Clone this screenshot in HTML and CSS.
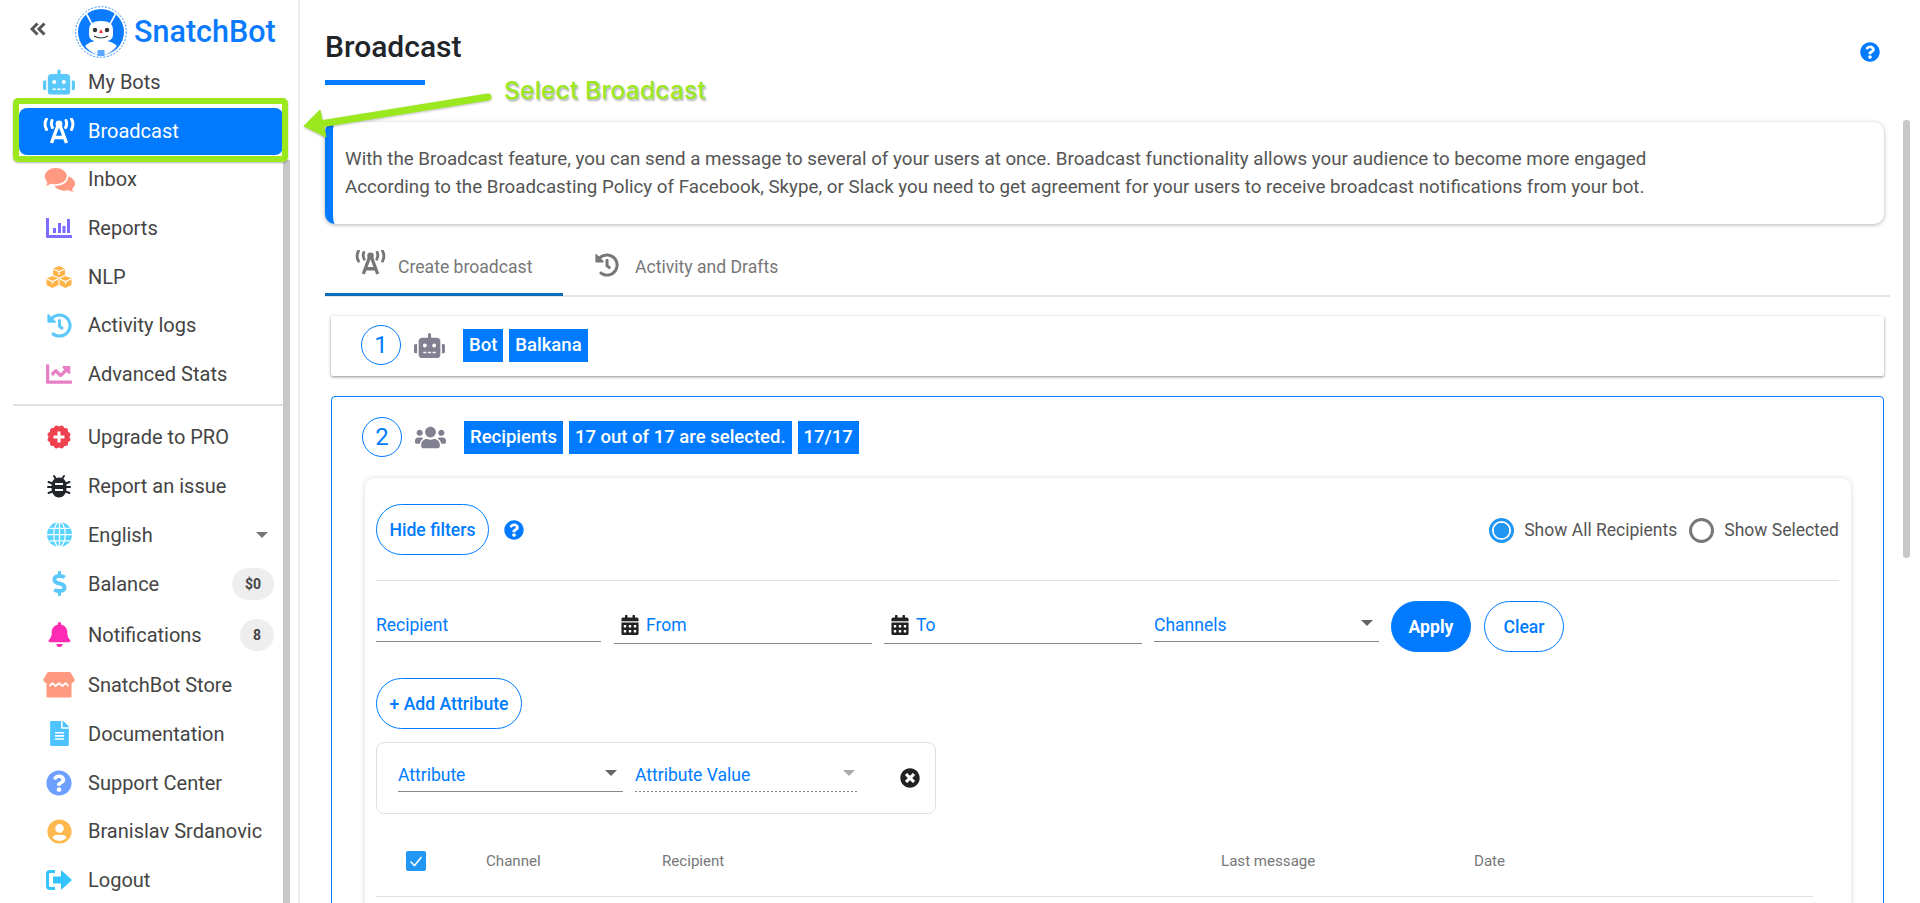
FILE: index.html
```html
<!DOCTYPE html>
<html lang="en">
<head>
<meta charset="utf-8">
<title>Broadcast - SnatchBot</title>
<link rel="stylesheet" href="styles.css">
</head>
<body>
<svg class="defs" aria-hidden="true">
  <symbol id="i-robot" viewBox="0 0 640 512"><path d="M32,224H64V416H32A31.96166,31.96166,0,0,1,0,384V256A31.96166,31.96166,0,0,1,32,224Zm512-48V448a64.06328,64.06328,0,0,1-64,64H160a64.06328,64.06328,0,0,1-64-64V176a79.974,79.974,0,0,1,80-80H288V32a32,32,0,0,1,64,0V96H464A79.974,79.974,0,0,1,544,176ZM264,256a40,40,0,1,0-40,40A39.997,39.997,0,0,0,264,256Zm-8,128H192v32h64Zm96,0H288v32h64ZM456,256a40,40,0,1,0-40,40A39.997,39.997,0,0,0,456,256Zm-8,128H384v32h64ZM640,256V384a31.96166,31.96166,0,0,1-32,32H576V224h32A31.96166,31.96166,0,0,1,640,256Z"/></symbol>
  <symbol id="i-help" viewBox="0 0 512 512"><path d="M504 256c0 136.997-111.043 248-248 248S8 392.997 8 256C8 119.083 119.043 8 256 8s248 111.083 248 248zM262.655 90c-54.497 0-89.255 22.957-116.549 63.758-3.536 5.286-2.353 12.415 2.715 16.258l34.699 26.31c5.205 3.947 12.621 3.008 16.665-2.122 17.864-22.658 30.113-35.797 57.303-35.797 20.429 0 45.698 13.148 45.698 32.958 0 14.976-12.363 22.667-32.534 33.976C247.128 238.528 216 254.941 216 296v4c0 6.627 5.373 12 12 12h56c6.627 0 12-5.373 12-12v-1.333c0-28.462 83.186-29.647 83.186-106.667 0-58.002-60.165-102-116.531-102zM256 338c-25.365 0-46 20.635-46 46 0 25.364 20.635 46 46 46s46-20.636 46-46c0-25.365-20.635-46-46-46z"/></symbol>
  <symbol id="i-history" viewBox="0 0 512 512"><path d="M504 255.531c.253 136.64-111.18 248.372-247.82 248.468-59.015.042-113.223-20.53-155.822-54.911-11.077-8.94-11.905-25.541-1.839-35.607l11.267-11.267c8.609-8.609 22.353-9.551 31.891-1.984C173.062 425.135 212.781 440 256 440c101.705 0 184-82.311 184-184 0-101.705-82.311-184-184-184-48.814 0-93.149 18.969-126.068 49.932l50.754 50.754c10.08 10.08 2.941 27.314-11.313 27.314H24c-8.837 0-16-7.163-16-16V38.627c0-14.254 17.234-21.393 27.314-11.314l49.372 49.372C129.209 34.136 189.552 8 256 8c136.81 0 247.747 110.78 248 247.531zm-180.912 78.784l9.823-12.63c8.138-10.463 6.253-25.542-4.21-33.679L288 256.349V152c0-13.255-10.745-24-24-24h-16c-13.255 0-24 10.745-24 24v135.651l65.409 50.874c10.463 8.137 25.541 6.253 33.679-4.21z"/></symbol>
  <symbol id="i-cal" viewBox="0 0 448 512"><path d="M0 464c0 26.5 21.5 48 48 48h352c26.5 0 48-21.5 48-48V192H0v272zm320-196c0-6.6 5.4-12 12-12h40c6.6 0 12 5.4 12 12v40c0 6.6-5.4 12-12 12h-40c-6.6 0-12-5.4-12-12v-40zm0 128c0-6.6 5.4-12 12-12h40c6.6 0 12 5.4 12 12v40c0 6.6-5.4 12-12 12h-40c-6.6 0-12-5.4-12-12v-40zM192 268c0-6.6 5.4-12 12-12h40c6.6 0 12 5.4 12 12v40c0 6.6-5.4 12-12 12h-40c-6.6 0-12-5.4-12-12v-40zm0 128c0-6.6 5.4-12 12-12h40c6.6 0 12 5.4 12 12v40c0 6.6-5.4 12-12 12h-40c-6.6 0-12-5.4-12-12v-40zM64 268c0-6.6 5.4-12 12-12h40c6.6 0 12 5.4 12 12v40c0 6.6-5.4 12-12 12H76c-6.6 0-12-5.4-12-12v-40zm0 128c0-6.6 5.4-12 12-12h40c6.6 0 12 5.4 12 12v40c0 6.6-5.4 12-12 12H76c-6.6 0-12-5.4-12-12v-40zM400 64h-48V16c0-8.8-7.2-16-16-16h-32c-8.8 0-16 7.2-16 16v48H160V16c0-8.8-7.2-16-16-16h-32c-8.8 0-16 7.2-16 16v48H48C21.5 64 0 85.5 0 112v48h448v-48c0-26.5-21.5-48-48-48z"/></symbol>
  <symbol id="i-air" viewBox="0 0 32 26"><g fill="none" stroke="currentColor"><path d="M8.500 25 15 7.500h2L23.500 25M11 19.500h10" stroke-width="3.400"/><path d="M9 2.500Q7.600 6 9.400 9.500M23 2.500q1.400 3.500-.4 7M3.500 1Q.6 6 3.500 11.500M28.500 1q2.900 5 0 10.500" stroke-width="3" stroke-linecap="round"/></g><circle cx="16" cy="6" r="3.400" fill="currentColor"/></symbol>
</svg>

<aside class="sidebar">
  <header class="brand">
    <button class="collapse" type="button" aria-label="Collapse"><svg viewBox="0 0 16 14"><path d="M7.500 1.500 2 7l5.500 5.500M14.500 1.500 9 7l5.500 5.500" fill="none" stroke="currentColor" stroke-width="3"/></svg></button>
    <svg class="logo" viewBox="0 0 52 52">
      <circle cx="26" cy="26" r="25.300" fill="#fff" stroke="#2f8bff" stroke-width="1" stroke-dasharray="2 1.500"/>
      <circle cx="26" cy="26" r="23" fill="#0a7bff"/>
      <path d="M10 40Q14 36 20 35H32Q38 36 42 40Q35 49 26 49T10 40Z" fill="#fff"/>
      <path d="M11 7 18 20M41 7 34 20" stroke="#fff" stroke-width="1.600" stroke-linecap="round"/>
      <path d="M14 24Q14 15 26 15T38 24V29Q38 36 26 36T14 29Z" fill="#fff"/>
      <circle cx="20" cy="24" r="2.200" fill="#333"/><circle cx="32" cy="24" r="2.200" fill="#333"/>
      <path d="M26 23l2 4h-4z" fill="#f33"/>
      <path d="M19 30Q26 34 33 30" fill="none" stroke="#333" stroke-width="1.200"/>
      <rect x="22.500" y="44" width="7" height="6" fill="#5aa8ff"/>
    </svg>
    <span class="brand-name">SnatchBot</span>
  </header>
  <nav class="menu">
    <a class="item"><span class="ico"><svg class="c-sky s28" viewBox="0 0 640 512"><use href="#i-robot"/></svg></span>My Bots</a>
    <a class="item active"><span class="ico"><svg class="s32" viewBox="0 0 32 26"><use href="#i-air"/></svg></span>Broadcast</a>
    <a class="item"><span class="ico"><svg class="c-salmon s28" viewBox="0 0 30 24"><path d="M20 9c5.500 0 10 3.200 10 7.200 0 2-1.100 3.700-2.800 5 .2 1.200 1 2 1.800 2.600-2 .2-3.900-.5-5.100-1.500-1.200.4-2.500.6-3.900.6-5.500 0-10-3.200-10-7.200S14.500 9 20 9z"/><path d="M12 .8c6.200 0 11.200 3.800 11.200 8.500S18.200 17.800 12 17.800c-1.500 0-3-.2-4.300-.7C6 18.500 3.700 19.300 1 19c1.200-1 2-2.300 2.300-3.500C1.900 13.900.8 11.700.8 9.300.8 4.600 5.800.8 12 .8z" stroke="#fff" stroke-width="1.600"/></svg></span>Inbox</a>
    <a class="item"><span class="ico"><svg class="c-violet s26" viewBox="0 0 26 20"><path d="M0 0h3v17h23v3H1a1 1 0 0 1-1-1zM7 10h3v5H7zM12 5h3v10h-3zM16.500 8h3v7h-3zM21 1h3v14h-3z"/></svg></span>Reports</a>
    <a class="item"><span class="ico"><svg class="c-amber s26" viewBox="0 0 26 22"><path d="M13 0l6 2.500v6.500l-6 2.500-6-2.500V2.500zM6.500 10l6 2.500V19l-6 3-6-3v-6.500zM19.500 10l6 2.500V19l-6 3-6-3v-6.500z"/><path d="M7 3l6 2.500L19 3M13 5.500V9M1 13l5.500 2.500L12 13M6.500 15.500V18M14 13l5.500 2.500L25 13M19.500 15.500V18" fill="none" stroke="#fff" stroke-width="1.200"/></svg></span>NLP</a>
    <a class="item"><span class="ico"><svg class="c-sky s25" viewBox="0 0 512 512"><use href="#i-history"/></svg></span>Activity logs</a>
    <a class="item"><span class="ico"><svg class="c-pink s26" viewBox="0 0 512 512"><path d="M496 384H64V80c0-8.840-7.160-16-16-16H16C7.160 64 0 71.160 0 80v336c0 17.670 14.330 32 32 32h464c8.840 0 16-7.160 16-16v-32c0-8.840-7.160-16-16-16zM464 96H345.940c-21.380 0-32.090 25.850-16.970 40.970l32.400 32.400L288 242.750l-73.370-73.370c-12.500-12.500-32.760-12.500-45.250 0l-68.690 68.690c-6.250 6.250-6.250 16.380 0 22.630l22.620 22.620c6.250 6.250 16.380 6.250 22.630 0L192 237.250l73.370 73.370c12.500 12.500 32.760 12.500 45.250 0l96-96 32.400 32.400c15.120 15.120 40.970 4.410 40.970-16.970V112c0-8.840-7.160-16-16-16z"/></svg></span>Advanced Stats</a>
    <hr class="menu-rule">
    <a class="item"><span class="ico"><svg class="c-red s26" viewBox="0 0 26 26"><rect x="4" y="4" width="18" height="18" rx="2.500"/><rect x="4" y="4" width="18" height="18" rx="2.500" transform="rotate(30 13 13)"/><rect x="4" y="4" width="18" height="18" rx="2.500" transform="rotate(60 13 13)"/><path d="M13 7.500v11M7.500 13h11" stroke="#fff" stroke-width="3"/></svg></span>Upgrade to PRO</a>
    <a class="item"><span class="ico"><svg class="c-ink s24" viewBox="0 0 24 24"><path d="M7 2l2 3M17 2l-2 3M1.500 8l4 1.500M22.500 8l-4 1.500M1 13h4M23 13h-4M1.500 19l4-1.500M22.500 19l-4-1.500" stroke="#212529" stroke-width="2" stroke-linecap="round"/><path d="M12 3.500c5 0 7.500 3.500 7.500 9.500S17 23.500 12 23.500 4.500 19 4.500 13 7 3.500 12 3.500z"/><path d="M8 10h8M8 16h8" stroke="#fff" stroke-width="2"/></svg></span>Report an issue</a>
    <a class="item"><span class="ico"><svg class="c-aqua s25" viewBox="0 0 26 26"><circle cx="13" cy="13" r="13"/><g fill="none" stroke="#fff" stroke-width="1.300"><ellipse cx="13" cy="13" rx="6" ry="13"/><path d="M13 0v26M0 13h26M2.500 6.500h21M2.500 19.500h21"/></g></svg></span>English<span class="caret menu-caret"></span></a>
    <a class="item tall"><span class="ico"><svg class="c-sky s25" viewBox="0 0 288 512"><path d="M209.200 233.400l-108-31.600C88.700 198.200 80 186.500 80 173.500c0-16.300 13.200-29.500 29.500-29.500h66.300c12.200 0 24.200 3.700 34.200 10.500 6.100 4.100 14.300 3.100 19.500-2l34.800-34c7.100-6.900 6.100-18.400-1.800-24.500C238 74.800 207.400 64.100 176 64V16c0-8.800-7.200-16-16-16h-32c-8.800 0-16 7.200-16 16v48h-2.500C45.800 64-5.400 118.700.5 183.600c4.200 46.100 39.400 83.600 83.800 96.600l102.500 30c12.500 3.700 21.200 15.300 21.200 28.300 0 16.300-13.200 29.500-29.500 29.500h-66.300C100 368 88 364.300 78 357.500c-6.100-4.100-14.300-3.100-19.500 2l-34.800 34c-7.100 6.900-6.100 18.400 1.800 24.500 24.500 19.200 55.100 29.900 86.500 30v48c0 8.800 7.200 16 16 16h32c8.800 0 16-7.200 16-16v-48.200c46.600-.9 90.300-28.600 105.700-72.700 21.500-61.600-14.600-124.800-72.500-141.700z"/></svg></span>Balance<span class="badge wide">$0</span></a>
    <a class="item taller"><span class="ico"><svg class="c-magenta s25" viewBox="0 0 448 512"><path d="M224 512c35.320 0 63.970-28.650 63.970-64H160.030c0 35.350 28.650 64 63.970 64zm215.390-149.710c-19.320-20.760-55.470-51.990-55.470-154.290 0-77.700-54.480-139.900-127.940-155.160V32c0-17.670-14.320-32-31.980-32s-31.980 14.330-31.980 32v20.840C118.560 68.100 64.080 130.300 64.080 208c0 102.300-36.150 133.530-55.470 154.290-6 6.450-8.660 14.160-8.610 21.710.11 16.400 12.980 32 32.100 32h383.800c19.120 0 32-15.600 32.100-32 .05-7.550-2.610-15.270-8.610-21.710z"/></svg></span>Notifications<span class="badge">8</span></a>
    <a class="item"><span class="ico"><svg class="c-salmon s32" viewBox="0 0 31 26"><path d="M3 8h25v16.500a1 1 0 0 1-1 1H4a1 1 0 0 1-1-1z"/><path d="M5 0h21a1.500 1.500 0 0 1 1.300.7L31 7c.4 2.500-1.500 4-3.500 4h-24C1.500 11-.4 9.500 0 7L3.700.7A1.500 1.500 0 0 1 5 0z"/><path d="M6 14l3-2.800 3 2.800 3.500-2.800L19 14l3-2.800 3 2.800" fill="none" stroke="#fff" stroke-width="1.800"/></svg></span>SnatchBot Store</a>
    <a class="item"><span class="ico"><svg class="c-doc s25" viewBox="0 0 384 512"><path d="M224 136V0H24C10.700 0 0 10.700 0 24v464c0 13.300 10.700 24 24 24h336c13.300 0 24-10.700 24-24V160H248c-13.200 0-24-10.800-24-24zm64 236c0 6.600-5.400 12-12 12H108c-6.600 0-12-5.400-12-12v-8c0-6.600 5.400-12 12-12h168c6.600 0 12 5.400 12 12v8zm0-64c0 6.600-5.400 12-12 12H108c-6.600 0-12-5.400-12-12v-8c0-6.600 5.400-12 12-12h168c6.600 0 12 5.400 12 12v8zm0-72v8c0 6.600-5.400 12-12 12H108c-6.600 0-12-5.400-12-12v-8c0-6.600 5.400-12 12-12h168c6.600 0 12 5.400 12 12zm96-114.100v6.100H256V0h6.100c6.400 0 12.500 2.500 17 7l97.900 98c4.500 4.500 7 10.600 7 16.900z"/></svg></span>Documentation</a>
    <a class="item"><span class="ico"><svg class="c-periwinkle s26" viewBox="0 0 512 512"><use href="#i-help"/></svg></span>Support Center</a>
    <a class="item"><span class="ico"><svg class="c-amber2 s25" viewBox="0 0 496 512"><path d="M248 8C111 8 0 119 0 256s111 248 248 248 248-111 248-248S385 8 248 8zm0 96c48.600 0 88 39.400 88 88s-39.400 88-88 88-88-39.400-88-88 39.400-88 88-88zm0 344c-58.700 0-111.300-26.600-146.500-68.200 18.800-35.400 55.600-59.800 98.500-59.800 2.400 0 4.800.4 7.100 1.100 13 4.200 26.600 6.900 40.900 6.900 14.300 0 28-2.700 40.900-6.900 2.300-.7 4.700-1.100 7.100-1.100 42.900 0 79.700 24.400 98.500 59.800C359.300 421.400 306.700 448 248 448z"/></svg></span>Branislav Srdanovic</a>
    <a class="item"><span class="ico"><svg class="c-logout s26" viewBox="0 0 26 20"><path d="M9 1.500H4Q1.500 1.500 1.500 4v12Q1.500 18.500 4 18.500h5" fill="none" stroke="currentColor" stroke-width="3"/><path d="M7 6.500h8V0l11 10-11 10v-6.500H7z"/></svg></span>Logout</a>
  </nav>
</aside>

<main class="main">
  <header class="page-head">
    <div>
      <h1 class="title">Broadcast</h1>
      <div class="title-bar"></div>
    </div>
    <svg class="head-help c-blue" viewBox="0 0 512 512"><use href="#i-help"/></svg>
  </header>

  <section class="info">
    <p>With the Broadcast feature, you can send a message to several of your users at once. Broadcast functionality allows your audience to become more engaged</p>
    <p>According to the Broadcasting Policy of Facebook, Skype, or Slack you need to get agreement for your users to receive broadcast notifications from your bot.</p>
  </section>

  <div class="tabs">
    <a class="tab tab-on"><svg class="tab-air" viewBox="0 0 32 26"><use href="#i-air"/></svg>Create broadcast</a>
    <a class="tab tab-off"><svg class="tab-hist" viewBox="0 0 512 512"><use href="#i-history"/></svg>Activity and Drafts</a>
  </div>

  <section class="step-card">
    <span class="step-no">1</span>
    <svg class="step-ico" viewBox="0 0 640 512"><use href="#i-robot"/></svg>
    <span class="tags"><span class="tag">Bot</span><span class="tag">Balkana</span></span>
  </section>

  <section class="step-open">
    <div class="step-head">
      <span class="step-no">2</span>
      <svg class="step-ico" viewBox="0 0 640 512"><path d="M96 224c35.300 0 64-28.700 64-64s-28.700-64-64-64-64 28.700-64 64 28.700 64 64 64zm448 0c35.300 0 64-28.700 64-64s-28.700-64-64-64-64 28.700-64 64 28.700 64 64 64zm32 32h-64c-17.600 0-33.500 7.100-45.100 18.600 40.300 22.100 68.900 62 75.100 109.400h66c17.700 0 32-14.300 32-32v-32c0-35.300-28.700-64-64-64zm-256 0c61.900 0 112-50.100 112-112S381.900 32 320 32 208 82.100 208 144s50.100 112 112 112zm76.800 32h-8.300c-20.800 10-43.900 16-68.500 16s-47.600-6-68.500-16h-8.300C179.600 288 128 339.600 128 403.200V432c0 26.500 21.500 48 48 48h288c26.500 0 48-21.500 48-48v-28.800c0-63.600-51.600-115.200-115.200-115.200zm-223.700-13.400C161.500 263.100 145.600 256 128 256H64c-35.300 0-64 28.700-64 64v32c0 17.700 14.300 32 32 32h65.900c6.300-47.400 34.900-87.300 75.200-109.400z"/></svg>
      <span class="tags"><span class="tag">Recipients</span><span class="tag">17 out of 17 are selected.</span><span class="tag">17/17</span></span>
    </div>

    <div class="panel">
      <div class="panel-top">
        <button class="pill pill-hide" type="button">Hide filters</button>
        <svg class="panel-help c-blue" viewBox="0 0 512 512"><use href="#i-help"/></svg>
        <label class="radio radio-first"><span class="dot dot-on"></span>Show All Recipients</label>
        <label class="radio"><span class="dot"></span>Show Selected</label>
      </div>

      <div class="filters">
        <div class="field f-recipient">Recipient</div>
        <div class="field f-date"><svg class="cal" viewBox="0 0 448 512"><use href="#i-cal"/></svg>From</div>
        <div class="field f-date"><svg class="cal" viewBox="0 0 448 512"><use href="#i-cal"/></svg>To</div>
        <div class="field f-recipient">Channels<span class="caret field-caret"></span></div>
        <button class="pill pill-apply" type="button">Apply</button>
        <button class="pill pill-clear" type="button">Clear</button>
      </div>

      <button class="pill pill-add" type="button">+ Add Attribute</button>

      <div class="attr-box">
        <div class="field attr-a">Attribute<span class="caret field-caret"></span></div>
        <div class="field attr-v">Attribute Value<span class="caret field-caret faint"></span></div>
        <svg class="attr-x" viewBox="0 0 512 512"><path d="M256 8C119 8 8 119 8 256s111 248 248 248 248-111 248-248S393 8 256 8zm121.600 313.100c4.700 4.700 4.700 12.300 0 17L338 377.600c-4.700 4.700-12.300 4.700-17 0L256 312l-65.100 65.600c-4.700 4.700-12.300 4.700-17 0L134.400 338c-4.700-4.700-4.700-12.300 0-17l65.600-65-65.600-65.100c-4.700-4.700-4.700-12.300 0-17l39.600-39.600c4.700-4.700 12.300-4.700 17 0l65 65.700 65.100-65.600c4.700-4.700 12.300-4.700 17 0l39.600 39.600c4.700 4.700 4.700 12.300 0 17L312 256l65.600 65.100z"/></svg>
      </div>

      <div class="thead">
        <span class="check"><svg viewBox="0 0 20 20"><path d="M4.500 10.500 8.500 14.500 15.500 6" fill="none" stroke="#fff" stroke-width="1.600"/></svg></span>
        <span>Channel</span>
        <span>Recipient</span>
        <span>Last message</span>
        <span>Date</span>
      </div>
    </div>
  </section>
</main>

<div class="thumb thumb-side"></div>
<div class="thumb thumb-main"></div>

<div class="note-box"></div>
<svg class="note-arrow" viewBox="0 0 200 50">
  <path d="M192 7 24 34" stroke="#9be81f" stroke-width="7" stroke-linecap="round"/>
  <path d="M8 36 24 20 30 47z" fill="#9be81f" stroke="#9be81f" stroke-width="1" stroke-linejoin="round"/>
</svg>
<div class="note-text">Select Broadcast</div>
</body>
</html>
```

FILE: styles.css
```css
* { box-sizing: border-box; }
html, body { margin: 0; height: 903px; overflow: hidden; }
body {
  display: flex;
  position: relative;
  background: #fff;
  font-family: Roboto, "Liberation Sans", sans-serif;
  color: #444;
}
.defs { position: absolute; width: 0; height: 0; }
svg { fill: currentColor; display: block; flex: none; }

/* sidebar */
.sidebar {
  width: 300px;
  flex: none;
  height: 903px;
  border-right: 2px solid #eee;
}
.brand { display: flex; align-items: center; height: 58px; padding-top: 6px; }
.collapse {
  width: 75px;
  padding: 0 0 6px 30px;
  border: 0;
  background: none;
  color: #555;
}
.collapse svg { width: 16px; height: 14px; }
.logo { width: 52px; height: 52px; }
.brand-name { margin-left: 7px; font-size: 30.500px; font-weight: 500; color: #0a7bff; line-height: 34px; }
.menu { display: flex; flex-direction: column; }
.item {
  display: flex;
  align-items: center;
  height: 48.67px;
  padding-left: 45px;
  font-size: 20px;
  color: #444;
  white-space: nowrap;
}
.item.tall { height: 50px; }
.item.taller { height: 52px; }
.item.active {
  height: 47px;
  margin: 1px 15px .5px 19px;
  padding-left: 26px;
  background: #007bff;
  border-radius: 8px;
  color: #fff;
}
.ico { width: 28px; margin-right: 15px; display: flex; justify-content: center; align-items: center; flex: none; }
.s24 { width: 24px; height: 24px; }
.s25 { width: 25px; height: 25px; }
.s26 { width: 26px; height: 26px; }
.s28 { width: 32px; height: 26px; }
.s32 { width: 32px; height: 26px; }
.c-sky { color: #5ac8fa; }
.c-salmon { color: #ff9a80; }
.c-violet { color: #7b6cff; }
.c-amber { color: #ffb347; }
.c-pink { color: #e67fc3; }
.c-red { color: #ef4150; }
.c-ink { color: #212529; }
.c-aqua { color: #59d4ff; }
.c-magenta { color: #ff2bb5; }
.c-doc { color: #4dc4ff; }
.c-periwinkle { color: #6c9fff; }
.c-amber2 { color: #ffb84d; }
.c-logout { color: #33c3ff; }
.c-blue { color: #007bff; }
.menu-rule { width: 276px; margin: 5.500px 0 7px 13px; border: 0; border-top: 2px solid #e2e2e2; }
.caret {
  width: 0;
  height: 0;
  border-left: 6px solid transparent;
  border-right: 6px solid transparent;
  border-top: 6px solid #777;
}
.menu-caret { margin-left: auto; margin-right: 30px; }
.badge {
  margin-left: auto;
  margin-right: 24px;
  width: 34px;
  height: 32px;
  border-radius: 16px;
  background: #eee;
  font-size: 14px;
  font-weight: 700;
  line-height: 32px;
  text-align: center;
  color: #444;
}
.badge.wide { width: 42px; }

/* main column */
.main { flex: 1; min-width: 0; height: 903px; overflow: hidden; padding: 0 36px 0 25px; }
.page-head { display: flex; justify-content: space-between; height: 122px; padding-top: 30px; }
.title { margin: 0; font-size: 30px; font-weight: 500; line-height: 34px; color: #212529; }
.title-bar { width: 100px; height: 5px; margin-top: 16px; background: #007bff; }
.head-help { width: 20px; height: 20px; margin: 12px 4px 0 0; }
.info {
  height: 102px;
  padding: 23px 0 0 12px;
  border-left: 8px solid #007bff;
  border-radius: 10px;
  background: #fff;
  box-shadow: 0 1px 4px rgba(0, 0, 0, .3);
  font-size: 18.750px;
  line-height: 28px;
  color: #555;
}
.info p { margin: 0; }
.tabs {
  display: flex;
  height: 73px;
  margin-right: -6px;
  border-bottom: 2px solid #e4e4e4;
  font-size: 17.600px;
  color: #777;
}
.tab { display: flex; align-items: center; height: 72px; }
.tab-on { width: 238px; padding: 16px 0 0 30px; border-bottom: 3px solid #0a6ebd; gap: 12px; }
.tab-off { padding: 14px 0 0 32px; gap: 16px; }
.tab-air { width: 31px; height: 25px; margin-top: -8px; }
.tab-hist { width: 24px; height: 24px; margin-top: -4px; }
.step-card {
  display: flex;
  align-items: center;
  height: 60px;
  margin: 19px 0 0 6px;
  padding: 0 0 2px 30px;
  border-radius: 2px;
  background: #fff;
  box-shadow: 0 1px 3px rgba(0, 0, 0, .45);
}
.step-no {
  width: 40px;
  height: 40px;
  margin-right: 13px;
  border: 1px solid #007bff;
  border-radius: 50%;
  font-size: 24px;
  line-height: 38px;
  text-align: center;
  color: #007bff;
  flex: none;
}
.step-ico { width: 31px; height: 25px; margin-right: 18px; color: #808090; }
.tags { display: flex; gap: 6px; }
.tag {
  height: 33px;
  padding: 0 6px;
  background: #007bff;
  color: #fff;
  font-size: 18.500px;
  font-weight: 500;
  line-height: 33px;
}
.step-open {
  height: 700px;
  margin: 20px 0 0 6px;
  padding: 20px 31px 0 30px;
  border: 1px solid #007bff;
  border-radius: 4px;
}
.step-head { display: flex; align-items: center; height: 40px; }
.panel {
  height: 600px;
  margin: 20px 0 0 2px;
  padding: 26px 12px 0 11px;
  border: 1px solid #eee;
  border-radius: 10px;
  box-shadow: 0 1px 5px rgba(0, 0, 0, .12);
}
.panel-top {
  display: flex;
  align-items: center;
  height: 77px;
  padding-bottom: 25px;
  border-bottom: 1px solid #e2e2e2;
  font-size: 17.500px;
  color: #555;
}
.pill {
  height: 51px;
  padding: 0;
  border: 1px solid #007bff;
  border-radius: 26px;
  background: #fff;
  color: #007bff;
  font: 500 17.600px Roboto, sans-serif;
}
.pill-hide { width: 113px; }
.panel-help { width: 20px; height: 20px; margin-left: 15px; }
.radio { display: flex; align-items: center; gap: 10px; margin-top: 1px; }
.radio + .radio { margin-left: 12px; }
.radio-first { margin-left: auto; }
.dot { width: 25px; height: 25px; border: 3px solid #777; border-radius: 50%; }
.dot-on { border-color: #2196f3; background: radial-gradient(circle, #2196f3 0 7.500px, #fff 8px); }
.filters { display: flex; align-items: flex-start; padding-top: 20px; height: 71px; }
.field {
  display: flex;
  align-items: center;
  height: 41px;
  padding-top: 8px;
  border-bottom: 1px solid #888;
  font-size: 17.500px;
  color: #007bff;
}
.f-recipient { width: 225px; margin-right: 13px; }
.f-date { width: 258px; height: 43px; margin-right: 12px; padding-top: 5px; }
.f-recipient:nth-child(4) { margin-right: 12px; }
.cal { width: 18px; height: 20px; margin: 0 7px 0 7px; color: #222; }
.field-caret { margin-left: auto; margin-right: 6px; margin-top: -4px; border-top-color: #666; }
.field-caret.faint { border-top-color: #aaa; margin-right: 2px; }
.pill-apply { width: 80px; background: #007bff; color: #fff; margin-right: 13px; font-weight: 700; }
.pill-clear { width: 80px; }
.pill-add { display: block; width: 146px; margin-top: 26px; }
.attr-box {
  display: flex;
  align-items: flex-start;
  width: 560px;
  height: 72px;
  margin-top: 13px;
  padding: 20px 0 0 21px;
  border: 1px solid #e0e0e0;
  border-radius: 8px;
}
.attr-box .field { height: 29px; padding: 0 0 5px; }
.attr-a { width: 225px; margin-right: 12px; }
.attr-box .attr-v {
  width: 222px;
  border-bottom: 1px solid transparent;
  background: repeating-linear-gradient(90deg, #888 0 2px, transparent 2px 4px) left bottom / 100% 1px no-repeat;
  background-origin: border-box;
  background-clip: border-box;
}
.attr-x { width: 20px; height: 20px; margin: 5px 0 0 43px; color: #222; }
.thead {
  display: grid;
  grid-template-columns: 80px 176px 559px 253px 1fr;
  align-items: center;
  width: 1437px;
  height: 83px;
  padding: 12px 0 0 30px;
  border-bottom: 1px solid #e2e2e2;
  font-size: 15.100px;
  color: #777;
}
.check { width: 20px; height: 20px; border-radius: 2px; background: #2196f3; }

/* overlays */
.thumb { position: absolute; width: 7px; background: #c8c8c8; }
.thumb-side { left: 283px; top: 160px; height: 743px; }
.thumb-main { left: 1903px; top: 120px; height: 438px; border-radius: 3px; }
.note-box {
  position: absolute;
  left: 13px;
  top: 98px;
  width: 275px;
  height: 64px;
  border: 6px solid #9be81f;
  border-radius: 5px;
  box-shadow: 0 1px 2px rgba(0, 0, 0, .3);
}
.note-arrow { position: absolute; left: 296px; top: 90px; width: 200px; height: 50px; filter: drop-shadow(0 1px 1px rgba(0, 0, 0, .25)); }
.note-text {
  position: absolute;
  left: 504px;
  top: 74px;
  font-family: Inter, sans-serif;
  font-size: 24.900px;
  font-weight: 500;
  line-height: 32px;
  color: #9be81f;
  text-shadow: 1px 2px 2px rgba(0, 0, 0, .3);
}
```
